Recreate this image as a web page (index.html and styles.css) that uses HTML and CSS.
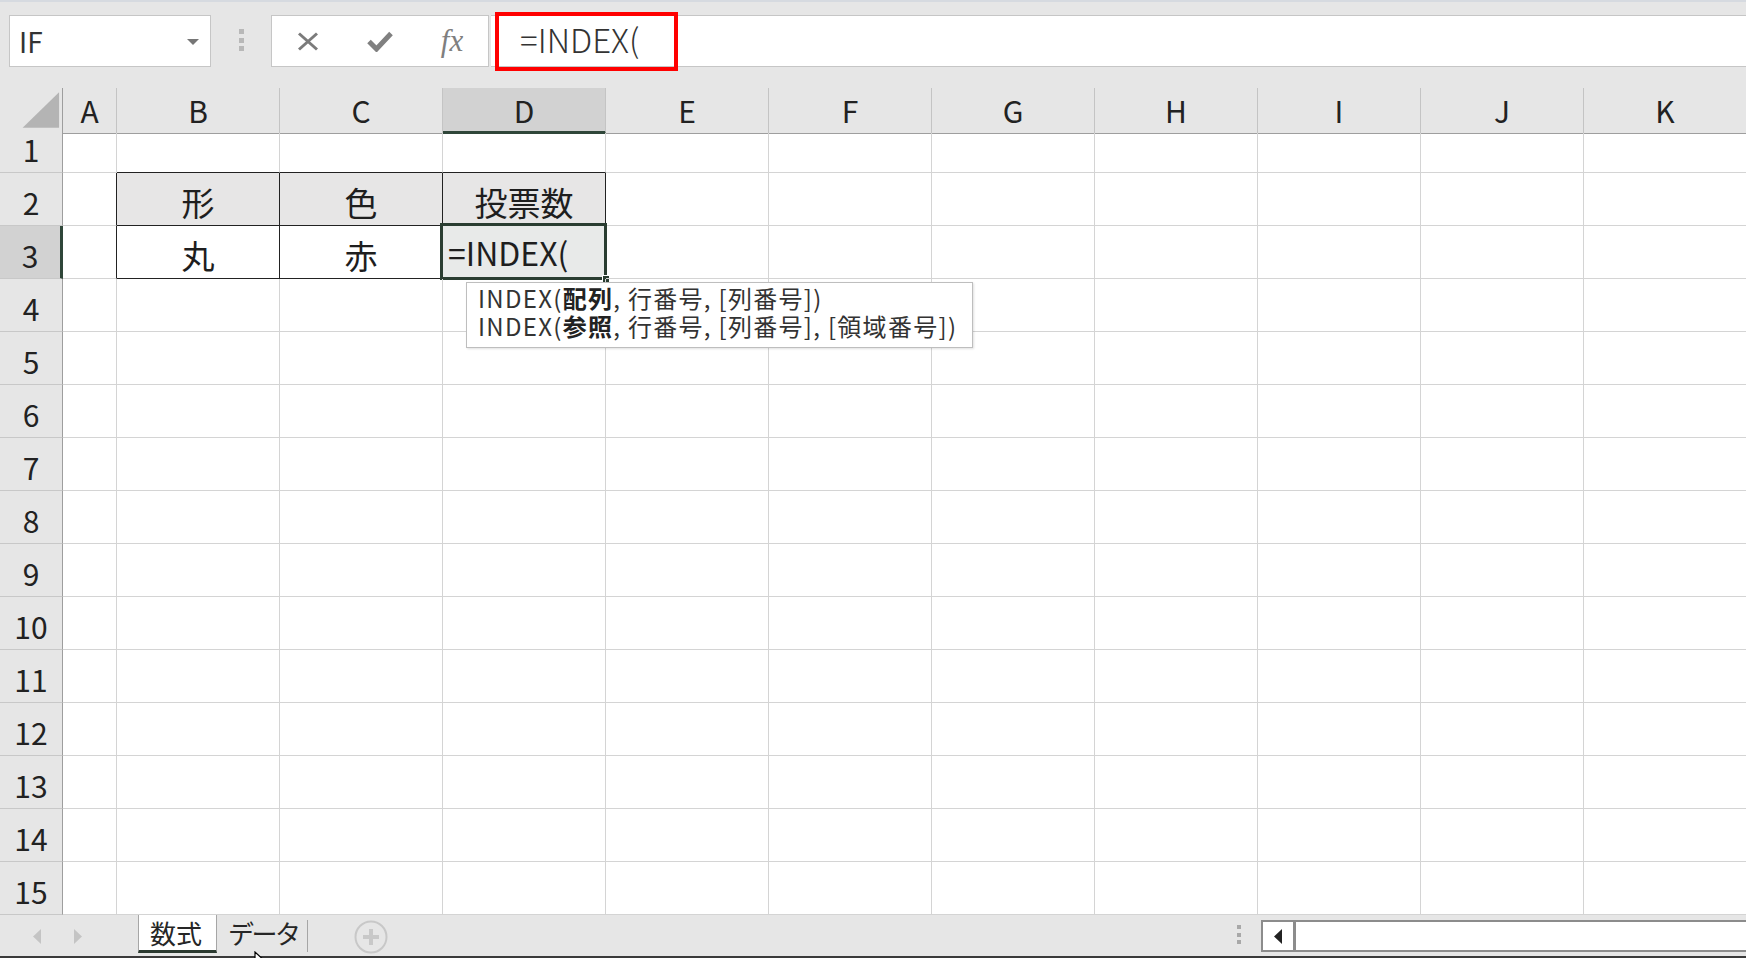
FILE: index.html
```html
<!DOCTYPE html>
<html lang="ja">
<head>
    <meta charset="UTF-8">
    <meta name="viewport" content="width=device-width, initial-scale=1.0">
    <title>数式 - INDEX</title>
    <link rel="stylesheet" href="styles.css">
</head>
<body>
<div class="app">

    <!-- name box + formula bar -->
    <div class="toolbar">
        <div class="namebox">
            <span>IF</span>
            <svg class="caret" width="12" height="6" viewBox="0 0 12 6"><path d="M0 0h12L6 6z"/></svg>
        </div>
        <div class="grip"><i></i><i></i><i></i></div>
        <div class="fx-buttons">
            <div class="fx-btn">
                <svg width="22" height="19" viewBox="0 0 22 19"><path d="M2 1.5L20 17.5M20 1.5L2 17.5" stroke="#7b7b7b" stroke-width="3" fill="none"/></svg>
            </div>
            <div class="fx-btn">
                <svg width="26" height="22" viewBox="0 0 26 22"><path d="M2 11.5L9.5 19L24 3.5" stroke="#808080" stroke-width="5" fill="none"/></svg>
            </div>
            <div class="fx-btn"><span class="fx">fx</span></div>
        </div>
        <div class="formula">
            <span class="formula-text">=INDEX(</span>
            <div class="highlight"></div>
        </div>
    </div>

    <!-- worksheet -->
    <div class="sheet">
        <div class="row hdr">
            <div class="corner"><svg width="63" height="45" viewBox="0 0 63 45"><path d="M23 40H60V4z" fill="#b4b4b4"/></svg></div>
            <div class="ch">A</div><div class="ch">B</div><div class="ch">C</div><div class="ch sel">D</div><div class="ch">E</div><div class="ch">F</div><div class="ch">G</div><div class="ch">H</div><div class="ch">I</div><div class="ch">J</div><div class="ch">K</div>
        </div>
        <div class="row r1">
            <div class="rh">1</div><div class="c"></div><div class="c above"></div><div class="c above"></div><div class="c above"></div><div class="c"></div><div class="c"></div><div class="c"></div><div class="c"></div><div class="c"></div><div class="c"></div><div class="c"></div>
        </div>
        <div class="row">
            <div class="rh">2</div><div class="c left"></div><div class="c th">形</div><div class="c th">色</div><div class="c th">投票数</div><div class="c"></div><div class="c"></div><div class="c"></div><div class="c"></div><div class="c"></div><div class="c"></div><div class="c"></div>
        </div>
        <div class="row">
            <div class="rh sel">3</div><div class="c left"></div><div class="c td">丸</div><div class="c td">赤</div>
            <div class="c td edit">=INDEX(<div class="selection"><span class="handle"></span></div></div>
            <div class="c"></div><div class="c"></div><div class="c"></div><div class="c"></div><div class="c"></div><div class="c"></div><div class="c"></div>
        </div>
        <div class="row"><div class="rh">4</div><div class="c"></div><div class="c"></div><div class="c"></div><div class="c"></div><div class="c"></div><div class="c"></div><div class="c"></div><div class="c"></div><div class="c"></div><div class="c"></div><div class="c"></div></div>
        <div class="row"><div class="rh">5</div><div class="c"></div><div class="c"></div><div class="c"></div><div class="c"></div><div class="c"></div><div class="c"></div><div class="c"></div><div class="c"></div><div class="c"></div><div class="c"></div><div class="c"></div></div>
        <div class="row"><div class="rh">6</div><div class="c"></div><div class="c"></div><div class="c"></div><div class="c"></div><div class="c"></div><div class="c"></div><div class="c"></div><div class="c"></div><div class="c"></div><div class="c"></div><div class="c"></div></div>
        <div class="row"><div class="rh">7</div><div class="c"></div><div class="c"></div><div class="c"></div><div class="c"></div><div class="c"></div><div class="c"></div><div class="c"></div><div class="c"></div><div class="c"></div><div class="c"></div><div class="c"></div></div>
        <div class="row"><div class="rh">8</div><div class="c"></div><div class="c"></div><div class="c"></div><div class="c"></div><div class="c"></div><div class="c"></div><div class="c"></div><div class="c"></div><div class="c"></div><div class="c"></div><div class="c"></div></div>
        <div class="row"><div class="rh">9</div><div class="c"></div><div class="c"></div><div class="c"></div><div class="c"></div><div class="c"></div><div class="c"></div><div class="c"></div><div class="c"></div><div class="c"></div><div class="c"></div><div class="c"></div></div>
        <div class="row"><div class="rh">10</div><div class="c"></div><div class="c"></div><div class="c"></div><div class="c"></div><div class="c"></div><div class="c"></div><div class="c"></div><div class="c"></div><div class="c"></div><div class="c"></div><div class="c"></div></div>
        <div class="row"><div class="rh">11</div><div class="c"></div><div class="c"></div><div class="c"></div><div class="c"></div><div class="c"></div><div class="c"></div><div class="c"></div><div class="c"></div><div class="c"></div><div class="c"></div><div class="c"></div></div>
        <div class="row"><div class="rh">12</div><div class="c"></div><div class="c"></div><div class="c"></div><div class="c"></div><div class="c"></div><div class="c"></div><div class="c"></div><div class="c"></div><div class="c"></div><div class="c"></div><div class="c"></div></div>
        <div class="row"><div class="rh">13</div><div class="c"></div><div class="c"></div><div class="c"></div><div class="c"></div><div class="c"></div><div class="c"></div><div class="c"></div><div class="c"></div><div class="c"></div><div class="c"></div><div class="c"></div></div>
        <div class="row"><div class="rh">14</div><div class="c"></div><div class="c"></div><div class="c"></div><div class="c"></div><div class="c"></div><div class="c"></div><div class="c"></div><div class="c"></div><div class="c"></div><div class="c"></div><div class="c"></div></div>
        <div class="row"><div class="rh">15</div><div class="c"></div><div class="c"></div><div class="c"></div><div class="c"></div><div class="c"></div><div class="c"></div><div class="c"></div><div class="c"></div><div class="c"></div><div class="c"></div><div class="c"></div></div>

        <!-- function argument hint -->
        <div class="tooltip">
            <div>INDEX(<b>配列</b>, 行番号, [列番号])</div>
            <div>INDEX(<b>参照</b>, 行番号, [列番号], [領域番号])</div>
        </div>
    </div>

    <!-- sheet tabs + horizontal scrollbar -->
    <div class="tabbar">
        <div class="tab-nav">
            <svg width="8" height="15" viewBox="0 0 8 15"><path d="M8 0V15L0 7.5z"/></svg>
            <svg width="8" height="15" viewBox="0 0 8 15"><path d="M0 0V15L8 7.5z"/></svg>
        </div>
        <div class="tab active">数式</div>
        <div class="tab">データ</div>
        <div class="add-sheet">
            <svg width="34" height="34" viewBox="0 0 34 34"><circle cx="17" cy="17" r="15.5" fill="none" stroke="#c8c8c8" stroke-width="2"/><path d="M17 9V25M9 17H25" stroke="#c8c8c8" stroke-width="4"/></svg>
        </div>
        <div class="spacer"></div>
        <div class="grip tab-grip"><i></i><i></i><i></i></div>
        <div class="hscroll">
            <div class="hscroll-btn"><svg width="8" height="15" viewBox="0 0 8 15"><path d="M8 0V15L0 7.5z"/></svg></div>
        </div>
        <svg class="pointer" width="14" height="22" viewBox="0 0 14 22"><path d="M1 1V17L5 13L8 20L10.5 19L7.5 12H13z" fill="#fff" stroke="#000" stroke-width="1.2"/></svg>
    </div>

</div>
</body>
</html>
```

FILE: styles.css
```css
* {
    box-sizing: border-box;
}
body {
    margin: 0;
    width: 1746px;
    height: 958px;
    overflow: hidden;
    background: #fff;
    font-family: "Noto Sans CJK JP", "Noto Sans", sans-serif;
    color: #262626;
}
.app {
    display: flex;
    flex-direction: column;
    height: 958px;
}

/* toolbar */
.toolbar {
    flex: none;
    height: 88px;
    background: #e6e6e6;
    border-top: 2px solid #d6dae0;
    padding-top: 13px;
    display: flex;
    align-items: flex-start;
}
.namebox {
    margin-left: 9px;
    width: 202px;
    height: 52px;
    background: #fff;
    border: 1px solid #c6c6c6;
    display: flex;
    align-items: center;
    justify-content: space-between;
    padding: 0 11px 0 9px;
    font-size: 28px;
    line-height: 50px;
    color: #333;
}
.caret {
    fill: #767676;
    margin-top: 1px;
}
.grip {
    display: flex;
    flex-direction: column;
    gap: 3.5px;
    margin: 14px 27px 0 28px;
}
.grip i {
    display: block;
    width: 5px;
    height: 5px;
    background: #b8b8b8;
}
.fx-buttons {
    width: 218px;
    height: 52px;
    background: #fff;
    border: 1px solid #c6c6c6;
    display: flex;
}
.fx-btn {
    width: 72px;
    display: flex;
    align-items: center;
    justify-content: center;
}
.fx {
    font-family: "Liberation Serif", serif;
    font-style: italic;
    font-size: 31px;
    color: #7f7f7f;
    line-height: 1;
    margin-top: -2px;
}
.formula {
    position: relative;
    flex: 1;
    height: 52px;
    margin-left: 2px;
    background: #fff;
    border-top: 1px solid #c6c6c6;
    border-bottom: 1px solid #c6c6c6;
    padding: 0 0 4px 29px;
    font-size: 33px;
    font-weight: 300;
    line-height: 46px;
    color: #333;
}
.highlight {
    position: absolute;
    left: 4px;
    top: -4px;
    width: 183px;
    height: 59px;
    border: 4px solid #f00;
}

/* worksheet grid */
.sheet {
    position: relative;
    flex: none;
    height: 827px;
}
.row {
    display: grid;
    grid-template-columns: 63px 54px repeat(10, 163px);
    height: 53px;
}
.row.hdr {
    height: 45px;
}
.row.r1 {
    height: 40px;
}
.corner, .ch, .rh {
    background: #e6e6e6;
    color: #222;
    font-size: 30px;
    line-height: 1;
    display: flex;
    align-items: flex-end;
    justify-content: center;
    padding-bottom: 8px;
}
.corner {
    padding: 0;
    border-right: 1px solid #9e9e9e;
    border-bottom: 1px solid #9e9e9e;
}
.ch {
    border-right: 1px solid #c4c4c4;
    border-bottom: 1px solid #9e9e9e;
}
.ch.sel {
    background: #d2d2d2;
    border-bottom: 3px solid #2f4639;
    padding-bottom: 6px;
}
.rh {
    border-right: 1px solid #9e9e9e;
    border-bottom: 1px solid #c8c8c8;
}
.rh.sel {
    background: #d2d2d2;
    border-right: 3px solid #2f4639;
}
.c {
    position: relative;
    border-right: 1px solid #d4d4d4;
    border-bottom: 1px solid #d4d4d4;
    font-size: 33px;
    line-height: 1;
    display: flex;
    align-items: flex-end;
    justify-content: center;
    padding-bottom: 6px;
    color: #1e1e1e;
}
.c.above {
    border-bottom-color: #222;
}
.c.left {
    border-right-color: #222;
}
.c.th, .c.td {
    border-right-color: #222;
    border-bottom-color: #222;
}
.c.th {
    background: #e7e6e6;
}
.c.edit {
    background: #e8eae9;
    justify-content: flex-start;
    padding: 0 0 10px 5px;
    font-size: 32px;
}
.selection {
    position: absolute;
    left: -3px;
    top: -3px;
    right: -2px;
    bottom: -2px;
    border: 3px solid #2a3d31;
}
.handle {
    position: absolute;
    right: -6px;
    bottom: -6px;
    width: 8px;
    height: 8px;
    background: #2a3d31;
    border: 1px solid #fff;
}

.tooltip {
    position: absolute;
    left: 466px;
    top: 194px;
    width: 507px;
    height: 66px;
    background: #fff;
    border: 1px solid #bebebe;
    box-shadow: 1px 1px 2px rgba(0, 0, 0, 0.12);
    padding: 1px 0 0 11px;
    font-size: 24px;
    line-height: 28px;
    letter-spacing: 1.3px;
    color: #333;
    white-space: nowrap;
}
.tooltip b {
    color: #222;
}

/* sheet tabs */
.tabbar {
    position: relative;
    flex: none;
    height: 43px;
    background: #e6e6e6;
    border-bottom: 2px solid #3a3a3a;
    display: flex;
    align-items: flex-start;
}
.tab-nav {
    width: 138px;
    height: 41px;
    display: flex;
    align-items: center;
    gap: 33px;
    padding: 2px 0 0 33px;
    fill: #c4c4c4;
}
.tab {
    height: 38px;
    padding: 0 12px;
    font-size: 26px;
    line-height: 36px;
    color: #262626;
}
.tab.active {
    width: 79px;
    background: #fff;
    border-left: 1px solid #a6a6a6;
    border-right: 1px solid #a6a6a6;
    border-bottom: 3px solid #2b3a30;
    padding: 0 0 0 11px;
}
.tab + .tab {
    width: 91px;
    height: 32px;
    margin-top: 5px;
    padding: 0 0 0 11px;
    line-height: 26px;
    letter-spacing: -2.5px;
    border-right: 1px solid #a6a6a6;
}
.add-sheet {
    margin: 5px 0 0 46px;
    display: flex;
}
.spacer {
    flex: 1;
}
.tab-grip {
    margin: 10px 20px 0 0;
    gap: 3.5px;
}
.tab-grip i {
    width: 4px;
    height: 4px;
    background: #a8a8a8;
}
.hscroll {
    width: 485px;
    height: 32px;
    margin-top: 5px;
    background: #fff;
    border: 2px solid #8c8c8c;
    border-right: none;
}
.hscroll-btn {
    width: 33px;
    height: 28px;
    border-right: 3px solid #8c8c8c;
    display: flex;
    align-items: center;
    justify-content: center;
    fill: #222;
}
.pointer {
    position: absolute;
    left: 254px;
    top: 36px;
}
```
